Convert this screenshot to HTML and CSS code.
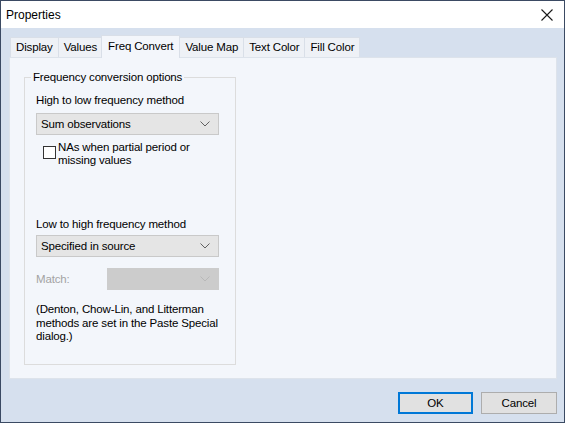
FILE: index.html
```html
<!DOCTYPE html>
<html>
<head>
<meta charset="utf-8">
<link rel="stylesheet" href="styles.css">
</head>
<body>
<div class="window">
  <div class="titlebar">
    <span class="title">Properties</span>
    <svg class="close" width="12" height="12" viewBox="0 0 12 12"><path d="M0.5 0.5 L11.5 11.5 M11.5 0.5 L0.5 11.5" stroke="#1a1a1a" stroke-width="1.1" fill="none"/></svg>
  </div>
  <div class="body">
    <div class="tabs">
      <div class="tab">Display</div>
      <div class="tab">Values</div>
      <div class="tab active">Freq Convert</div>
      <div class="tab">Value Map</div>
      <div class="tab">Text Color</div>
      <div class="tab">Fill Color</div>
    </div>
    <div class="panel">
      <fieldset class="group">
        <legend>Frequency conversion options</legend>
        <div class="label">High to low frequency method</div>
        <div class="combo"><span>Sum observations</span><svg class="chev" width="10" height="6" viewBox="0 0 10 6"><path d="M0.5 0.5 L5 5 L9.5 0.5" stroke="#606060" fill="none"/></svg></div>
        <div class="check">
          <div class="box"></div>
          <div class="checklabel">NAs when partial period or<br>missing values</div>
        </div>
        <div class="label low">Low to high frequency method</div>
        <div class="combo tight"><span>Specified in source</span><svg class="chev" width="10" height="6" viewBox="0 0 10 6"><path d="M0.5 0.5 L5 5 L9.5 0.5" stroke="#606060" fill="none"/></svg></div>
        <div class="matchrow">
          <span class="matchlabel">Match:</span>
          <div class="combo disabled"><span></span><svg class="chev" width="10" height="6" viewBox="0 0 10 6"><path d="M0.5 0.5 L5 5 L9.5 0.5" stroke="#b8b8b8" fill="none"/></svg></div>
        </div>
        <div class="note">(Denton, Chow-Lin, and Litterman methods are set in the Paste Special dialog.)</div>
      </fieldset>
    </div>
    <div class="buttons">
      <div class="btn default">OK</div>
      <div class="btn">Cancel</div>
    </div>
  </div>
</div>
</body>
</html>
```

FILE: styles.css
```css
* { box-sizing: border-box; }
html, body { margin: 0; padding: 0; }
body {
  width: 565px; height: 423px; overflow: hidden;
  font-family: "Liberation Sans", Arial, sans-serif;
  font-size: 11.5px; letter-spacing: -0.15px; color: #000;
}
.window {
  width: 565px; height: 423px;
  border: 1px solid #3b4a63;
  display: flex; flex-direction: column;
  background: #d6e0ee;
}
.titlebar {
  height: 27px; flex: none; background: #fff;
  display: flex; align-items: center; justify-content: space-between;
  padding: 0 11px 0 5px;
}
.title { font-size: 12px; letter-spacing: 0; }
.close { display: block; margin-top: 1px; }
.body {
  flex: 1; display: flex; flex-direction: column;
  padding: 7px 7px 0 8px;
}
.tabs {
  display: flex; align-items: flex-end; height: 22px;
  padding-left: 1px; position: relative; z-index: 1;
}
.tab {
  height: 20px; padding: 0 5px;
  line-height: 19px;
  background: #eef1f6;
  border: 1px solid #d9dfe8;
  border-bottom: none;
  margin-right: -1px;
}
.tab.active {
  height: 23px; line-height: 20px;
  background: #f3f6fb; border-color: #d9dfe8;
  margin: 0 -1px 0 -1px; padding: 0 6px;
  position: relative; top: 1px;
  z-index: 2;
}
.panel {
  width: 548px; height: 322px; flex: none;
  background: #f3f6fb;
  border: 1px solid #dde3eb;
  padding: 12px 0 0 14px;
}
.group {
  margin: 0; width: 212px; height: 295px;
  border: 1px solid #dcdcdc;
  padding: 0 0 0 11px;
}
.group legend {
  padding: 0 2px; margin-left: -5px;
  line-height: 14px;
}
.label { margin-top: 9px; line-height: 15px; height: 15px; }
.label.low { margin-top: 50px; }
.combo {
  margin-top: 5px;
  width: 183px; height: 22px;
  background: #e5e5e5; border: 1px solid #c9c9c9;
  display: flex; align-items: center; justify-content: space-between;
  padding: 0 8px 0 4px;
}
.combo.tight { margin-top: 3px; }
.combo.disabled { width: 112px; background: #cccccc; border-color: #cccccc; margin-top: 0; }
.chev { display: block; }
.check { display: flex; margin-top: 6px; padding-left: 7px; height: 26px; }
.box {
  width: 13px; height: 13px; margin-top: 5px;
  border: 1px solid #333; background: #fff;
  flex: none;
}
.checklabel { margin-left: 2px; line-height: 13px; }
.matchrow {
  margin-top: 11px; display: flex; align-items: center;
  width: 183px; justify-content: space-between;
}
.matchlabel { color: #a3a3a3; }
.note { margin-top: 13px; width: 195px; line-height: 13.5px; }
.buttons {
  display: flex; justify-content: flex-end; gap: 8px;
  padding: 13px 0 0 0;
}
.btn {
  width: 76px; height: 22px;
  background: #e1e1e1; border: 1px solid #adadad;
  display: flex; align-items: center; justify-content: center;
}
.btn.default { border: 2px solid #0078d7; width: 75px; }
```
